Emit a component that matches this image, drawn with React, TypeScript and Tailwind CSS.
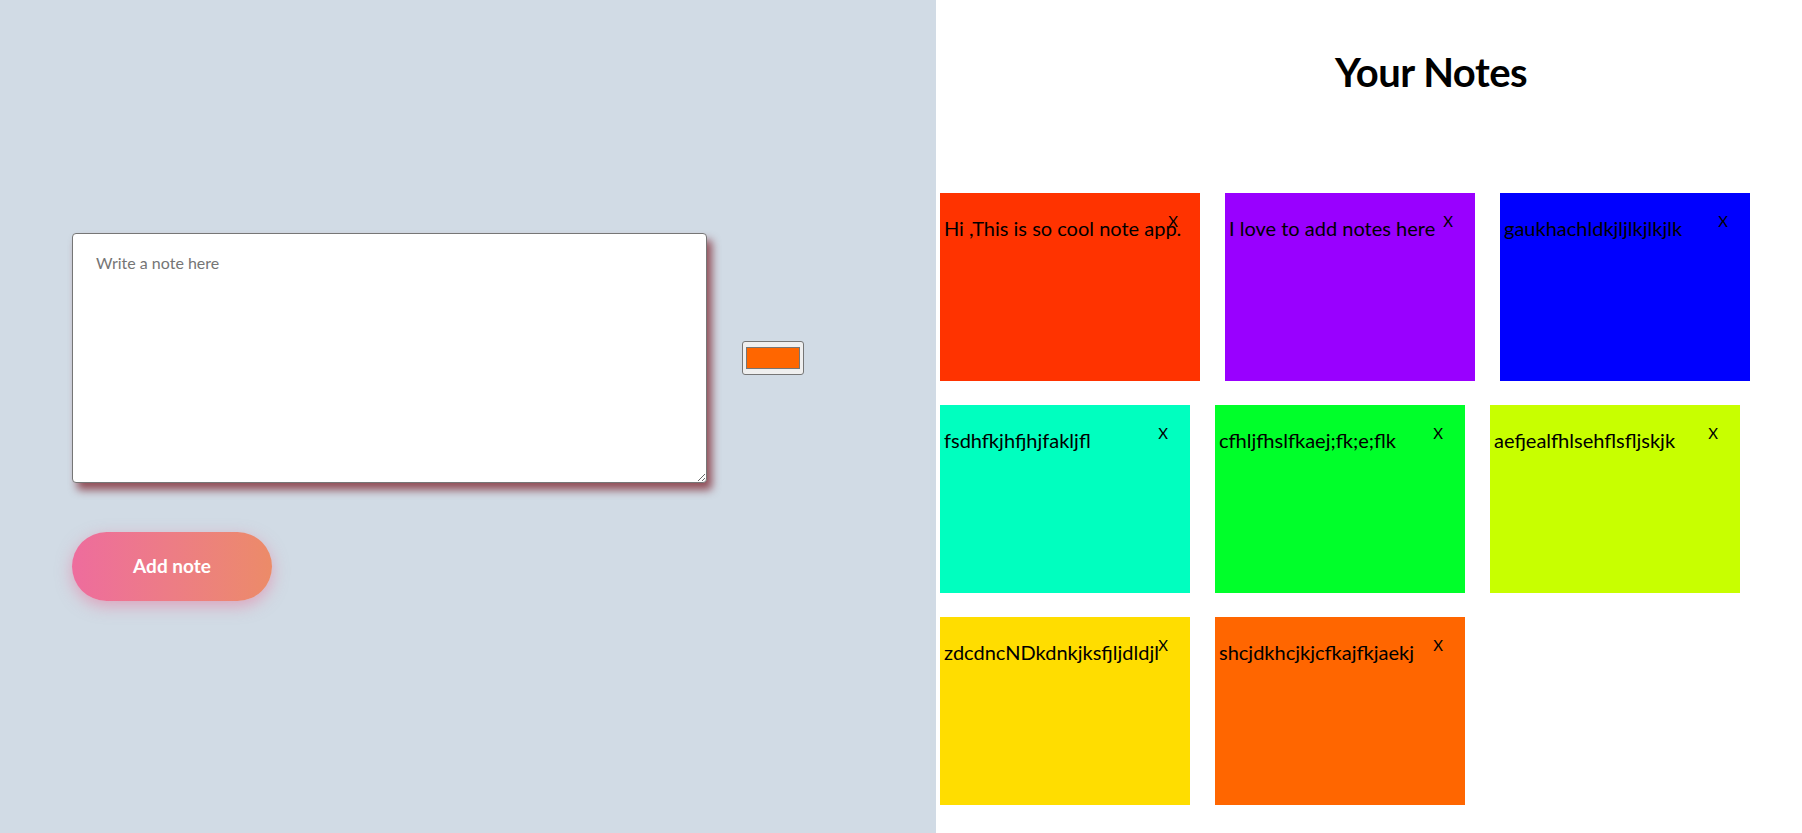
import React from "react";

type Note = { text: string; color: string; wide?: boolean };

const notes: Note[] = [
  { text: "Hi ,This is so cool note app.", color: "bg-[#ff3300]", wide: true },
  { text: "I love to add notes here", color: "bg-[#9900ff]" },
  { text: "gaukhachldkjljlkjlkjlk", color: "bg-[#0000ff]" },
  { text: "fsdhfkjhfjhjfakljfl", color: "bg-[#00ffbf]" },
  { text: "cfhljfhslfkaej;fk;e;flk", color: "bg-[#00ff2a]" },
  { text: "aefjealfhlsehflsfljskjk", color: "bg-[#c8ff00]" },
  { text: "zdcdncNDkdnkjksfjljdldjl", color: "bg-[#ffdd00]" },
  { text: "shcjdkhcjkjcfkajfkjaekj", color: "bg-[#ff6600]" },
];

function NoteCard({ note }: { note: Note }) {
  return (
    <div
      className={`relative h-[188px] ${note.wide ? "w-[260px]" : "w-[250px]"} ${note.color} pl-[4px] pt-[23px]`}
    >
      <p className="text-[20px] leading-[24px] text-black whitespace-nowrap">{note.text}</p>
      <button className="absolute top-[19px] right-[22px] text-[15px] leading-[18px] text-black">
        X
      </button>
    </div>
  );
}

export default function App() {
  return (
    <div
      className="flex w-full h-[833px] overflow-hidden"
      style={{ fontFamily: "Lato, 'Noto Sans', sans-serif" }}
    >
      {/* Left panel */}
      <div className="w-[936px] shrink-0 bg-[#d1dbe5] flex flex-col justify-center pl-[72px] gap-[49px]">
        <div className="flex items-center gap-[35px]">
          <textarea
            placeholder="Write a note here"
            className="w-[635px] h-[250px] bg-white border border-[#767676] rounded-[4px] px-[23px] pt-[19px] text-[16px] leading-[19px] text-black placeholder:text-[#757575] outline-none shadow-[5px_7px_9px_rgba(120,20,30,0.7)]"
          />
          <div className="w-[62px] h-[34px] rounded-[3px] border border-[#767676] bg-[#efefef] px-[3px] py-[5px]">
            <div className="w-full h-full bg-[#ff6600] border border-[#767676]" />
          </div>
        </div>
        <button className="w-[200px] h-[69px] rounded-full bg-gradient-to-r from-[#ee6c9d] to-[#ec8b68] text-white font-bold text-[19px] shadow-[0_5px_16px_rgba(236,110,150,0.5)]">
          Add note
        </button>
      </div>

      {/* Right panel */}
      <div className="flex-1 bg-white pl-[4px]">
        <h1 className="pl-[120px] pt-[48px] text-center text-[40px] leading-[48px] font-bold text-black tracking-[-0.5px]">
          Your Notes
        </h1>
        <div className="mt-[97px] flex flex-wrap gap-x-[25px] gap-y-[24px] w-[810px]">
          {notes.map((n, i) => (
            <NoteCard key={i} note={n} />
          ))}
        </div>
      </div>
    </div>
  );
}
